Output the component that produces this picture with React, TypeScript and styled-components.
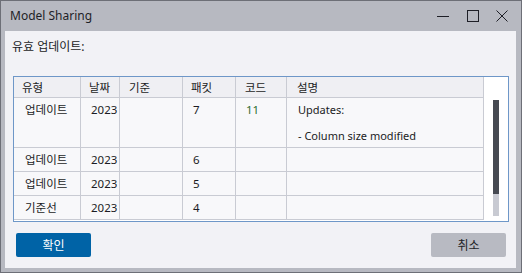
import React from 'react';
import styled, {createGlobalStyle} from 'styled-components';

const GlobalStyle = createGlobalStyle`
    html, body {
      margin: 0;
      padding: 0;
      background: #b7b9c1;
    }

    body {
      font-family: "Noto Sans", "Noto Sans CJK KR", sans-serif;
      color: #1b1c24;
    }
`;

const KR = `"Noto Sans", "Noto Sans CJK KR", sans-serif`;

const Window = styled.div`
    width: 522px;
    height: 273px;
    box-sizing: border-box;
    border: 1px solid #6d6f77;
    background: #b7b9c1;
    display: flex;
    flex-direction: column;
    padding: 0 5px 4px 4px;
`;

const TitleBar = styled.div`
    height: 30px;
    display: flex;
    align-items: center;
    padding-left: 5px;
    font-size: 12px;
    color: #1e1f27;
`;

const Title = styled.div`
    flex: 1;
    margin-top: -1px;
`;

const TitleButton = styled.div`
    width: 29px;
    height: 30px;
    display: flex;
    align-items: center;
    justify-content: center;
`;

const Content = styled.div`
    flex: 1;
    background: #f2f2f6;
    display: flex;
    flex-direction: column;
    padding: 8px 7px 11px 8px;
`;

const Caption = styled.div`
    font-family: ${KR};
    font-size: 12px;
    line-height: 16px;
    margin-left: -1px;
`;

const TableBox = styled.div`
    margin-top: 21px;
    height: 146px;
    box-sizing: border-box;
    border: 1px solid #6e97c8;
    background: #ffffff;
    display: flex;
    overflow: hidden;
`;

const Grid = styled.div`
    display: grid;
    grid-template-columns: 67px 39px 63px 53px 51px 197px;
    grid-template-rows: 21px 50px 24px 24px 24px;
    align-content: start;
`;

const Cell = styled.div<{ $head?: boolean; $tall?: boolean; $pad?: number; $color?: string }>`
    box-sizing: border-box;
    border-right: 1px solid #c9cbd3;
    border-bottom: 1px solid #c9cbd3;
    background: ${p => (p.$head ? '#efeff3' : '#f8f8fa')};
    padding-left: ${p => p.$pad ?? 10}px;
    font-family: ${KR};
    font-size: 11.5px;
    color: ${p => p.$color ?? '#1b1c24'};
    display: flex;
    align-items: ${p => (p.$tall ? 'flex-start' : 'center')};
    padding-top: ${p => (p.$tall ? 5 : 0)}px;
    white-space: pre;
    line-height: 13px;
`;

const Desc = styled.div`
    font-family: "Noto Sans", sans-serif;
    font-size: 11px;
    line-height: 13px;
`;

const ScrollArea = styled.div`
    flex: 1;
    padding: 23px 0 0 9px;
`;

const Track = styled.div`
    width: 6px;
    height: 116px;
    background: #c8cad2;
    display: flex;
    flex-direction: column;
`;

const Thumb = styled.div`
    height: 94px;
    background: #464a52;
`;

const Footer = styled.div`
    margin-top: 11px;
    display: flex;
    justify-content: space-between;
    padding: 0 3px 0 3px;
`;

const Button = styled.button<{ $primary?: boolean }>`
    width: 75px;
    height: 24px;
    border: none;
    border-radius: 2px;
    background: ${p => (p.$primary ? '#0063a6' : '#b8bac2')};
    color: ${p => (p.$primary ? '#ffffff' : '#1e1f27')};
    font-family: ${KR};
    font-size: 12px;
    padding: 0;
`;

const rows = [
    {type: '업데이트', date: '2023', base: '', pkt: '7', code: '11', desc: 'Updates:\n\n- Column size modified'},
    {type: '업데이트', date: '2023', base: '', pkt: '6', code: '', desc: ''},
    {type: '업데이트', date: '2023', base: '', pkt: '5', code: '', desc: ''},
    {type: '기준선', date: '2023', base: '', pkt: '4', code: '', desc: ''},
];

const headers: [string, number][] = [['유형', 8], ['날짜', 8], ['기준', 9], ['패킷', 8], ['코드', 9], ['설명', 10]];

const App = () => {
    return (
        <>
            <GlobalStyle/>
            <Window>
                <TitleBar>
                    <Title>Model Sharing</Title>
                    <TitleButton>
                        <svg width="13" height="13" viewBox="0 0 13 13">
                            <path d="M0 6.5 H12" stroke="#1e1f27" strokeWidth="1"/>
                        </svg>
                    </TitleButton>
                    <TitleButton>
                        <svg width="12" height="12" viewBox="0 0 12 12">
                            <rect x="0.5" y="0.5" width="11" height="11" fill="none" stroke="#1e1f27" strokeWidth="1"/>
                        </svg>
                    </TitleButton>
                    <TitleButton>
                        <svg width="12" height="12" viewBox="0 0 12 12">
                            <path d="M0.5 0.5 L11.5 11.5 M11.5 0.5 L0.5 11.5" stroke="#1e1f27" strokeWidth="1"/>
                        </svg>
                    </TitleButton>
                </TitleBar>
                <Content>
                    <Caption>유효 업데이트:</Caption>
                    <TableBox>
                        <Grid>
                            {headers.map(([h, pad]) => <Cell key={h} $head $pad={pad}>{h}</Cell>)}
                            {rows.map((r, i) => (
                                <React.Fragment key={i}>
                                    <Cell $tall={i === 0} $pad={11}>{r.type}</Cell>
                                    <Cell $tall={i === 0} $pad={10}>{r.date}</Cell>
                                    <Cell $tall={i === 0}>{r.base}</Cell>
                                    <Cell $tall={i === 0} $pad={10}>{r.pkt}</Cell>
                                    <Cell $tall={i === 0} $pad={10} $color="#2f6e2f">{r.code}</Cell>
                                    <Cell $tall={i === 0} $pad={11}><Desc>{r.desc}</Desc></Cell>
                                </React.Fragment>
                            ))}
                        </Grid>
                        <ScrollArea>
                            <Track><Thumb/></Track>
                        </ScrollArea>
                    </TableBox>
                    <Footer>
                        <Button $primary>확인</Button>
                        <Button>취소</Button>
                    </Footer>
                </Content>
            </Window>
        </>
    );
};

export default App;
